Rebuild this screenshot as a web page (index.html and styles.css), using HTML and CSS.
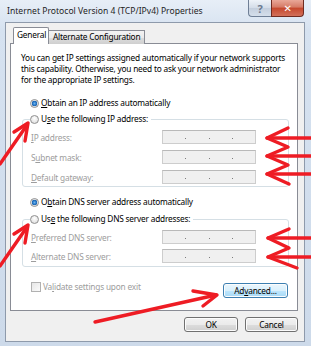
FILE: index.html
```html
<!DOCTYPE html>
<html>
<head>
<meta charset="utf-8">
<link rel="stylesheet" href="styles.css">
</head>
<body>
<div class="window">
  <div class="titlebar">
    <span class="title">Internet Protocol Version 4 (TCP/IPv4) Properties</span>
    <div class="caption">
      <div class="cbtn help">?</div>
      <div class="cbtn close">&#x2715;</div>
    </div>
  </div>
  <div class="client">
    <div class="tabs">
      <div class="tab active">General</div>
      <div class="tab">Alternate Configuration</div>
    </div>
    <div class="panel">
      <p class="intro">You can get IP settings assigned automatically if your network supports<br>this capability. Otherwise, you need to ask your network administrator<br>for the appropriate IP settings.</p>
      <div class="radio-row first"><span class="radio checked"></span><span><u>O</u>btain an IP address automatically</span></div>
      <fieldset class="group">
        <legend class="radio-row"><span class="radio"></span><span>U<u>s</u>e the following IP address:</span></legend>
        <div class="field-row"><span class="flabel"><u>I</u>P address:</span><span class="ipbox"><i></i><i></i><i></i></span></div>
        <div class="field-row"><span class="flabel">S<u>u</u>bnet mask:</span><span class="ipbox"><i></i><i></i><i></i></span></div>
        <div class="field-row"><span class="flabel"><u>D</u>efault gateway:</span><span class="ipbox"><i></i><i></i><i></i></span></div>
      </fieldset>
      <div class="radio-row dns"><span class="radio checked"></span><span>O<u>b</u>tain DNS server address automatically</span></div>
      <fieldset class="group group2">
        <legend class="radio-row"><span class="radio"></span><span>Us<u>e</u> the following DNS server addresses:</span></legend>
        <div class="field-row"><span class="flabel"><u>P</u>referred DNS server:</span><span class="ipbox"><i></i><i></i><i></i></span></div>
        <div class="field-row"><span class="flabel"><u>A</u>lternate DNS server:</span><span class="ipbox"><i></i><i></i><i></i></span></div>
      </fieldset>
      <div class="bottom-row">
        <div class="check-row"><span class="checkbox"></span><span>Va<u>l</u>idate settings upon exit</span></div>
        <div class="btn hot">Ad<u>v</u>anced...</div>
      </div>
    </div>
    <div class="footer">
      <div class="btn ok">OK</div>
      <div class="btn cancel">Cancel</div>
    </div>
  </div>
  <svg class="arrows" width="311" height="346" viewBox="0 0 311 346">
    <g fill="none" stroke="#ee1c24" stroke-width="3.4" stroke-linecap="round" stroke-linejoin="round">
      <polyline points="0,164 27,125"/>
      <polyline points="14,132 28,123 25,141"/>
      <polyline points="0,266 27,227"/>
      <polyline points="14,234 28,225 25,243"/>
      <polyline points="288,128 267,138 288,147 267,156 288,165 267,174 289,184"/>
      <line x1="267" y1="138" x2="311" y2="138"/>
      <line x1="267" y1="156" x2="311" y2="156"/>
      <line x1="267" y1="174" x2="311" y2="174"/>
      <polyline points="289,229 268,238 289,248 268,257 297,268"/>
      <line x1="268" y1="238" x2="311" y2="238"/>
      <line x1="268" y1="257" x2="311" y2="257"/>
      <polyline points="95,322 216,295"/>
      <polyline points="193,291 217,295 203,306"/>
    </g>
  </svg>
</div>
</body>
</html>
```

FILE: styles.css
```css
* { box-sizing: border-box; }
html, body { margin: 0; padding: 0; }
body {
  width: 311px;
  height: 346px;
  overflow: hidden;
  background: #cfdbea;
  font-family: "Noto Sans", "DejaVu Sans", sans-serif;
  font-size: 8.3px;
  letter-spacing: -0.2px;
  color: #000;
}
u { text-decoration: underline; text-underline-offset: 1px; }

.window {
  position: relative;
  width: 311px;
  height: 346px;
  background: linear-gradient(#e7eef7, #d6e2f0 30px, #cddaea);
  display: flex;
  flex-direction: column;
}

.titlebar {
  height: 22px;
  display: flex;
  justify-content: space-between;
  align-items: flex-start;
}
.title {
  padding: 6px 0 0 7px;
  font-size: 8.6px;
  letter-spacing: 0;
  line-height: 11px;
  color: #1e1e1e;
}
.caption {
  display: flex;
  margin-right: 7px;
}
.cbtn {
  height: 17px;
  border: 1px solid #6f7f96;
  border-top: none;
  display: flex;
  align-items: center;
  justify-content: center;
  font-weight: bold;
}
.help {
  width: 23px;
  border-radius: 0 0 0 4px;
  border-right: none;
  background: linear-gradient(#eef3f9, #d3dce8 50%, #c3cedd 51%, #d5dfeb);
  color: #6b7a90;
  font-size: 11px;
}
.close {
  width: 33px;
  border-radius: 0 0 4px 0;
  border-color: #6f2b20;
  background: linear-gradient(#e9a798, #d57a66 45%, #c6472c 50%, #d2705a);
  color: #fff;
  font-size: 10px;
}

.client {
  margin-left: 5px;
  width: 300px;
  height: 320px;
  background: #f0f0f0;
  border: 1px solid #8e9aab;
  padding: 4px 6px 0 4px;
}

.tabs {
  display: flex;
  align-items: flex-end;
  height: 17px;
  padding-left: 3px;
}
.tab {
  height: 14px;
  padding: 0 4px;
  border: 1px solid #898c95;
  border-bottom: none;
  background: linear-gradient(#f3f3f3, #ebebeb 50%, #dddddd 51%, #cfcfcf);
  line-height: 12px;
  margin-left: -1px;
}
.tab.active {
  position: relative;
  z-index: 1;
  height: 17px;
  width: 36px;
  background: #fff;
  margin-left: 0;
  padding: 1px 0 0 3px;
  border-radius: 2px 2px 0 0;
}

.panel {
  width: 288px;
  height: 268px;
  margin-top: -1px;
  border: 1px solid #898c95;
  background: #fff;
  padding: 8px 0 0 10px;
}
.intro {
  margin: 0;
  line-height: 11px;
  white-space: nowrap;
}

.radio-row {
  display: flex;
  align-items: center;
  height: 12px;
  line-height: 12px;
  white-space: nowrap;
}
.radio-row.first { margin: 12px 0 0 9px; }
.radio-row.dns { margin: 9px 0 0 9px; }
.radio {
  width: 9px;
  height: 9px;
  border-radius: 50%;
  border: 1px solid #8f8f8f;
  background: radial-gradient(circle at 50% 35%, #ffffff, #e4e4e4 70%, #d2d2d2);
  margin-right: 2px;
  flex: none;
}
.radio.checked {
  background: radial-gradient(circle, #6fb2e8 0, #2b7ecf 1.6px, #1d5fa8 2.6px, #f4f4f4 3.1px, #dcdcdc);
}

.group {
  width: 267px;
  margin: 4px 0 0 1px;
  border: 1px solid #d5dfe5;
  border-radius: 3px;
  padding: 5px 0 2px 8px;
}
.group legend {
  padding: 0 3px 0 0;
  margin-left: -1px;
}
.group2 { margin-top: 5px; padding-bottom: 3px; }

.field-row {
  display: flex;
  align-items: center;
  height: 14px;
  color: #9d9d9d;
}
.field-row + .field-row { margin-top: 6px; }
.group2 .field-row + .field-row { margin-top: 5px; }
.flabel { width: 131px; }
.ipbox {
  width: 94px;
  height: 14px;
  border: 1px solid #cdcdcd;
  border-top-color: #b9b9b9;
  background: #f0f0f0;
  display: flex;
  justify-content: space-evenly;
  align-items: center;
  padding-top: 2px;
}
.ipbox i {
  display: block;
  width: 1px;
  height: 1px;
  background: #7c7c7c;
}

.bottom-row {
  display: flex;
  justify-content: space-between;
  align-items: flex-start;
  width: 257px;
  margin: 14px 0 0 10px;
}
.check-row {
  display: flex;
  align-items: center;
  height: 11px;
  color: #9d9d9d;
}
.checkbox {
  width: 10px;
  height: 10px;
  border: 1px solid #b1b1b1;
  background: linear-gradient(135deg, #e6e6e6, #fbfbfb);
  margin-right: 2px;
}

.btn {
  height: 15px;
  border: 1px solid #707070;
  border-radius: 3px;
  background: linear-gradient(#f2f2f2, #ebebeb 50%, #dddddd 51%, #cfcfcf);
  box-shadow: inset 0 0 0 1px #fcfcfc;
  display: flex;
  align-items: center;
  justify-content: center;
  line-height: 12px;
}
.btn.hot {
  width: 65px;
  margin-top: 2px;
  border-color: #3c7fb1;
  background: linear-gradient(#eaf6fd, #d9f0fc 50%, #bee6fd 51%, #a7d9f5);
}
.footer {
  display: flex;
  justify-content: flex-end;
  gap: 7px;
  margin-top: 6px;
}
.btn.ok { width: 54px; }
.btn.cancel { width: 53px; }

.arrows {
  position: absolute;
  left: 0;
  top: 0;
  pointer-events: none;
}
```
